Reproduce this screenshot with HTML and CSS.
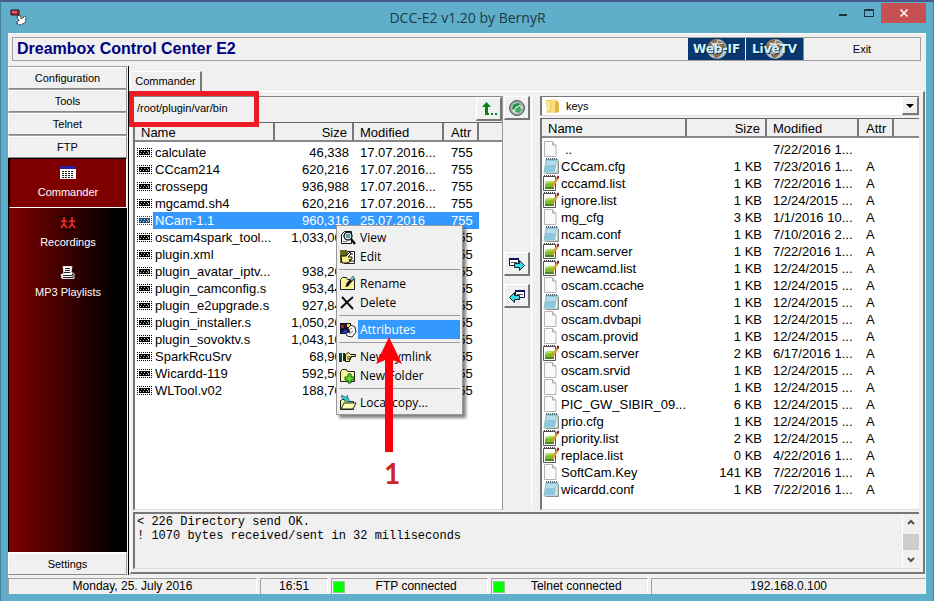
FILE: index.html
```html
<!DOCTYPE html>
<html lang="en">
<head>
<meta charset="utf-8">
<title>DCC-E2 v1.20 by BernyR</title>
<link rel="stylesheet" href="styles.css">
</head>
<body>
<svg class="sprite" aria-hidden="true">
  <symbol id="bin" viewBox="0 0 15 9"><path d="M0 .5h15M0 8.500h15M.5 0v9M14.500 0v9" fill="none" stroke="currentColor" stroke-dasharray="1 1"/><rect x="2" y="2" width="11" height="5" fill="currentColor"/><path d="M3 5h1v1H3zM4 3h1v1H4zM6 5h1v1H6zM7 3h1v1H7zM9 5h1v1H9zM10 3h1v1h-1zM11 4h1v2h-1z" fill="#bbb"/></symbol>
  <symbol id="page" viewBox="0 0 16 16"><path d="M1.500.5h8l3.500 3.500v11.500h-11.500z" fill="#fafafa" stroke="#b4b4b4"/><path d="M9.500.5v3.500h3.500" fill="#ddd" stroke="#aaa"/></symbol>
  <symbol id="note" viewBox="0 0 16 16"><path d="M3 1.500h12V13l-1 2H1z" fill="#dff1f7" stroke="#8ba7b0" stroke-width=".8"/><path d="M3.500 2h10.500l-2 12H1z" fill="#8cc8da"/><path d="M4 3h9l-1 4H3z" fill="#b5deeb"/><path d="M3 1h12" stroke="#51666e" stroke-width="2" stroke-dasharray="1 1"/><path d="M15.500 3v12.500H3" fill="none" stroke="#8e8e80"/></symbol>
  <symbol id="npp" viewBox="0 0 16 16"><path d="M.5 1.500h12v14H.5z" fill="#fff" stroke="#555"/><path d="M2 7q4-2 9-1v8H2z" fill="#b2dc5a"/><path d="M2 9q4-1 9-1v6H2z" fill="#7cbd2c"/><path d="M2 12h9v2H2z" fill="#3f8b1b"/><path d="M1 1h12" stroke="#444" stroke-width="2" stroke-dasharray="1 1"/><path d="M9 13l.5-3.500L13.500 3l1.500 1-4 7z" fill="#e9ad32" stroke="#a87416" stroke-width=".5"/><path d="M13.500 3l1-2.500 1.500.5v2l-1 1z" fill="#75202c"/></symbol>
  <symbol id="globe" viewBox="0 0 24 22"><circle cx="12" cy="11" r="10" fill="#b7c5cc"/><path d="M3 7q4-7 10-6l-2 4-4 1-1 4-4 1zM13 3l5 1 3 5-4 3-3-4zM8 13l6 1 2 3-5 4-3-4z" fill="#8b6c4b"/><path d="M5 14q7 3 14 0M6 5q6 3 12 0" fill="none" stroke="#f2f2e8"/></symbol>
</svg>
<div class="window">
  <header class="titlebar">
    <svg class="app-icon" viewBox="0 0 17 17"><path d="M1 1h8v5H1z" fill="#c52331" stroke="#301018"/><path d="M2 3h5" stroke="#efb2b2"/><path d="M7 7l3-1 1 4 4-3 1 2-1 5-5 2-4-2 3-2z" fill="#fff" stroke="#222" stroke-dasharray="2 1"/></svg>
    <h1>DCC-E2 v1.20 by BernyR</h1>
    <div class="window-buttons">
      <button aria-label="Minimize"><svg viewBox="0 0 26 20" width="26" height="20"><path d="M10 12h8" stroke="#1d3540" stroke-width="2"/></svg></button>
      <button aria-label="Maximize"><svg viewBox="0 0 26 20" width="26" height="20"><path d="M9.500 6.500h9v7h-9zM9 7.500h10" fill="none" stroke="#1d3540"/></svg></button>
      <button class="close" aria-label="Close"><svg viewBox="0 0 10 10" width="10" height="10"><path d="M1.500 1.500l7 7M8.500 1.500l-7 7" stroke="#fff" stroke-width="1.600"/></svg></button>
    </div>
  </header>
  <div class="client">
    <div class="banner">
      <h2>Dreambox Control Center E2</h2>
      <div class="links">
        <button class="web"><svg class="globe"><use href="#globe"/></svg><span>Web-IF</span></button>
        <button class="web"><svg class="globe"><use href="#globe"/></svg><span>LiveTV</span></button>
      </div>
      <button class="exit">Exit</button>
    </div>
    <div class="workspace">
      <nav class="sidebar">
        <button class="side">Configuration</button>
        <button class="side">Tools</button>
        <button class="side">Telnet</button>
        <button class="side">FTP</button>
        <div class="tools">
          <button class="tool active"><svg viewBox="0 0 16 14" width="16" height="14"><path d="M0 0h16v13H0z" fill="#fff"/><path d="M0 0h16v3H0z" fill="#2222a0"/><path d="M2 5.500h12M2 7.500h12M2 9.500h12M2 11.500h12" stroke="#222" stroke-dasharray="2 1"/></svg>Commander</button>
          <button class="tool"><svg viewBox="0 0 16 14" width="16" height="14"><path d="M0 .5h16M0 13.500h16" stroke="#000" stroke-dasharray="2 1"/><path d="M4 1v2M1 6l3-2 3 2M4 4v4l-3 4M4 8l3 4M12 1v2M9 6l3-2 3 2M12 4v4l-3 4M12 8l3 4" stroke="#f33025" stroke-width="1.500" fill="none"/></svg>Recordings</button>
          <button class="tool"><svg viewBox="0 0 16 14" width="16" height="14"><path d="M3 .5h9l-1 6 3 1v5H2l-1-4 3-1z" fill="#fff" stroke="#ddd"/><path d="M5 2.500h5M5 4.500h5M4 6.500h6M3 9.500h9l1-2M3 11.500h10v-4" stroke="#222" fill="none"/></svg>MP3 Playlists</button>
        </div>
        <button class="side settings">Settings</button>
      </nav>
      <main class="page">
        <div class="tabs"><button class="tab">Commander</button></div>
        <div class="sheet">
          <div class="panes">
            <section class="left">
              <div class="pathbar">
                <input class="path" type="text" aria-label="Remote path" value="/root/plugin/var/bin">
                <button class="raised" aria-label="Parent folder"><svg viewBox="0 0 18 16" width="18" height="16"><path d="M5 14h4v-2H8V6h3L6.500 1 2 6h3zM11 12h2v2h-2zM15 12h2v2h-2z" fill="#08820e"/></svg></button>
              </div>
              <div class="list">
                <table class="files remote">
                  <colgroup><col class="c-name"><col class="c-size"><col class="c-date"><col class="c-attr"><col></colgroup>
                  <thead><tr><th>Name</th><th>Size</th><th>Modified</th><th>Attr</th><th></th></tr></thead>
                  <tbody>
                    <tr><td><svg><use href="#bin"/></svg>calculate</td><td>46,338</td><td>17.07.2016...</td><td>755</td><td></td></tr>
                    <tr><td><svg><use href="#bin"/></svg>CCcam214</td><td>620,216</td><td>17.07.2016...</td><td>755</td><td></td></tr>
                    <tr><td><svg><use href="#bin"/></svg>crossepg</td><td>936,988</td><td>17.07.2016...</td><td>755</td><td></td></tr>
                    <tr><td><svg><use href="#bin"/></svg>mgcamd.sh4</td><td>620,216</td><td>17.07.2016...</td><td>755</td><td></td></tr>
                    <tr class="selected"><td><svg><use href="#bin"/></svg><span>NCam-1.1</span></td><td>960,316</td><td>25.07.2016</td><td>755</td><td></td></tr>
                    <tr><td><svg><use href="#bin"/></svg>oscam4spark_tool...</td><td>1,033,000</td><td></td><td>755</td><td></td></tr>
                    <tr><td><svg><use href="#bin"/></svg>plugin.xml</td><td>0</td><td></td><td>755</td><td></td></tr>
                    <tr><td><svg><use href="#bin"/></svg>plugin_avatar_iptv...</td><td>938,200</td><td></td><td>755</td><td></td></tr>
                    <tr><td><svg><use href="#bin"/></svg>plugin_camconfig.s</td><td>953,440</td><td></td><td>755</td><td></td></tr>
                    <tr><td><svg><use href="#bin"/></svg>plugin_e2upgrade.s</td><td>927,840</td><td></td><td>755</td><td></td></tr>
                    <tr><td><svg><use href="#bin"/></svg>plugin_installer.s</td><td>1,050,200</td><td></td><td>755</td><td></td></tr>
                    <tr><td><svg><use href="#bin"/></svg>plugin_sovoktv.s</td><td>1,043,100</td><td></td><td>755</td><td></td></tr>
                    <tr><td><svg><use href="#bin"/></svg>SparkRcuSrv</td><td>68,900</td><td></td><td>755</td><td></td></tr>
                    <tr><td><svg><use href="#bin"/></svg>Wicardd-119</td><td>592,500</td><td></td><td>755</td><td></td></tr>
                    <tr><td><svg><use href="#bin"/></svg>WLTool.v02</td><td>188,700</td><td></td><td>755</td><td></td></tr>
                  </tbody>
                </table>
              </div>
            </section>
            <section class="middle">
              <button class="raised" aria-label="Refresh"><svg viewBox="0 0 18 18" width="18" height="18"><circle cx="9" cy="9" r="7.500" fill="#96a3a2" stroke="#555e5e"/><circle cx="9" cy="9" r="5.500" fill="#d9e8df"/><path d="M4 10q0-6 6-6l3 1-2 2q-4 0-5 4z" fill="#299045"/><path d="M7 13l1-5 6-2-2 2 2 3-3 3z" fill="#4ba765"/><path d="M8 9l4-3" stroke="#fff"/></svg></button>
              <div class="transfer">
                <button class="raised" aria-label="Copy to local"><svg viewBox="0 0 18 14" width="18" height="14"><path d="M1.500 1.500h9v7h-9z" fill="#fff" stroke="#11115c"/><path d="M1 2h10" stroke="#11115c" stroke-width="2"/><path d="M3 5.500h6" stroke="#555"/><path d="M6.500 6.500h5v-3l5 5-5 5v-3h-5z" fill="#37dce2" stroke="#123"/></svg></button>
                <button class="raised" aria-label="Copy to box"><svg viewBox="0 0 18 14" width="18" height="14"><path d="M7.500 1.500h9v7h-9z" fill="#fff" stroke="#11115c"/><path d="M7 2h10" stroke="#11115c" stroke-width="2"/><path d="M9 5.500h6" stroke="#555"/><path d="M11.500 6.500h-5v-3l-5 5 5 5v-3h5z" fill="#37dce2" stroke="#123"/></svg></button>
              </div>
            </section>
            <section class="right">
              <div class="combo">
                <svg viewBox="0 0 14 16" width="14" height="16"><path d="M0 2h7l1 12-7 1z" fill="#edc95a"/><path d="M5 1l7 1v12l-7 1z" fill="#f8df86"/><path d="M9 3l4 1v10l-4 1z" fill="#e1b945"/><path d="M1 3h3v10H1z" fill="#f9e7a2"/></svg>
                <select aria-label="Local folder"><option>keys</option></select>
                <span class="drop"><svg viewBox="0 0 8 4" width="8" height="4"><path d="M0 0h8L4 4z"/></svg></span>
              </div>
              <div class="list">
                <table class="files local">
                  <colgroup><col class="c-name"><col class="c-size"><col class="c-date"><col class="c-attr"><col></colgroup>
                  <thead><tr><th>Name</th><th>Size</th><th>Modified</th><th>Attr</th><th></th></tr></thead>
                  <tbody>
                    <tr class="up"><td><svg><use href="#page"/></svg>..</td><td></td><td>7/22/2016 1...</td><td></td><td></td></tr>
                    <tr><td><svg><use href="#note"/></svg>CCcam.cfg</td><td>1 KB</td><td>7/23/2016 1...</td><td>A</td><td></td></tr>
                    <tr><td><svg><use href="#npp"/></svg>cccamd.list</td><td>1 KB</td><td>7/22/2016 1...</td><td>A</td><td></td></tr>
                    <tr><td><svg><use href="#npp"/></svg>ignore.list</td><td>1 KB</td><td>12/24/2015 ...</td><td>A</td><td></td></tr>
                    <tr><td><svg><use href="#page"/></svg>mg_cfg</td><td>3 KB</td><td>1/1/2016 10...</td><td>A</td><td></td></tr>
                    <tr><td><svg><use href="#note"/></svg>ncam.conf</td><td>1 KB</td><td>7/10/2016 2...</td><td>A</td><td></td></tr>
                    <tr><td><svg><use href="#npp"/></svg>ncam.server</td><td>1 KB</td><td>7/22/2016 1...</td><td>A</td><td></td></tr>
                    <tr><td><svg><use href="#npp"/></svg>newcamd.list</td><td>1 KB</td><td>12/24/2015 ...</td><td>A</td><td></td></tr>
                    <tr><td><svg><use href="#page"/></svg>oscam.ccache</td><td>1 KB</td><td>12/24/2015 ...</td><td>A</td><td></td></tr>
                    <tr><td><svg><use href="#note"/></svg>oscam.conf</td><td>1 KB</td><td>12/24/2015 ...</td><td>A</td><td></td></tr>
                    <tr><td><svg><use href="#page"/></svg>oscam.dvbapi</td><td>1 KB</td><td>12/24/2015 ...</td><td>A</td><td></td></tr>
                    <tr><td><svg><use href="#page"/></svg>oscam.provid</td><td>1 KB</td><td>12/24/2015 ...</td><td>A</td><td></td></tr>
                    <tr><td><svg><use href="#npp"/></svg>oscam.server</td><td>2 KB</td><td>6/17/2016 1...</td><td>A</td><td></td></tr>
                    <tr><td><svg><use href="#page"/></svg>oscam.srvid</td><td>1 KB</td><td>12/24/2015 ...</td><td>A</td><td></td></tr>
                    <tr><td><svg><use href="#page"/></svg>oscam.user</td><td>1 KB</td><td>12/24/2015 ...</td><td>A</td><td></td></tr>
                    <tr><td><svg><use href="#page"/></svg>PIC_GW_SIBIR_09...</td><td>6 KB</td><td>12/24/2015 ...</td><td>A</td><td></td></tr>
                    <tr><td><svg><use href="#note"/></svg>prio.cfg</td><td>1 KB</td><td>12/24/2015 ...</td><td>A</td><td></td></tr>
                    <tr><td><svg><use href="#npp"/></svg>priority.list</td><td>2 KB</td><td>12/24/2015 ...</td><td>A</td><td></td></tr>
                    <tr><td><svg><use href="#npp"/></svg>replace.list</td><td>0 KB</td><td>4/22/2016 1...</td><td>A</td><td></td></tr>
                    <tr><td><svg><use href="#page"/></svg>SoftCam.Key</td><td>141 KB</td><td>7/22/2016 1...</td><td>A</td><td></td></tr>
                    <tr><td><svg><use href="#note"/></svg>wicardd.conf</td><td>1 KB</td><td>7/22/2016 1...</td><td>A</td><td></td></tr>
                  </tbody>
                </table>
              </div>
            </section>
          </div>
          <div class="log">
            <pre>&lt; 226 Directory send OK.
! 1070 bytes received/sent in 32 milliseconds</pre>
            <div class="scroll">
              <button aria-label="Scroll up"><svg viewBox="0 0 8 6" width="8" height="6"><path d="M1 5l3-3 3 3" fill="none" stroke="#505050" stroke-width="2"/></svg></button>
              <span class="thumb"></span>
              <button aria-label="Scroll down"><svg viewBox="0 0 8 6" width="8" height="6"><path d="M1 1l3 3 3-3" fill="none" stroke="#505050" stroke-width="2"/></svg></button>
            </div>
          </div>
        </div>
        <div class="menu" role="menu">
          <button role="menuitem"><svg viewBox="0 0 18 16"><path d="M2.500 4.500l3-3h7v12h-10z" fill="#f4fcff" stroke="#111"/><path d="M4 11.500h4" stroke="#777"/><circle cx="9" cy="6" r="4" fill="#b9e7e9" stroke="#111" stroke-width="1.300"/><path d="M7 5h4M7 7h4" stroke="#345"/><path d="M12 9l4 5" stroke="#111" stroke-width="2.500"/></svg>View</button>
          <button role="menuitem"><svg viewBox="0 0 18 16"><path d="M1 1h7v13H1z" fill="#696920"/><path d="M8.500 2.500h7v12h-10z" fill="#fff" stroke="#222"/><path d="M2 7h5l4-4 1 2-3 3h4v2l-3 1 2 1-4 2H3z" fill="#f4f18c" stroke="#111"/><path d="M11 5h3M12 12h3" stroke="#222"/></svg>Edit</button>
          <hr>
          <button role="menuitem"><svg viewBox="0 0 18 16"><path d="M1.500 3.500l2-2h4l1 2h7v10h-14z" fill="#f9f795" stroke="#222"/><path d="M8 9l7-8" stroke="#111" stroke-width="3"/><path d="M12 4l3-3" stroke="#69d4dd" stroke-width="2"/><path d="M6 11l2-3 2 2z"/></svg>Rename</button>
          <button role="menuitem"><svg viewBox="0 0 18 16"><path d="M3 2l11 12M14 2q-6 5-12 11" stroke="#111" stroke-width="2" fill="none"/></svg>Delete</button>
          <hr>
          <button role="menuitem" class="hot"><svg viewBox="0 0 18 16"><path d="M1 1h11v11H1z" fill="#141425"/><path d="M2 3h3v3H2z" fill="#c11"/><path d="M8 2h3v3H8z" fill="#ffda21"/><path d="M3 11l3-4 3 4z" fill="#2235de"/><path d="M9 6l3-3 4 2 1 5-4 5-5-1-1-3 4-1z" fill="#fff" stroke="#222"/><path d="M10 8l3-2M10 12l4-3" stroke="#777"/></svg><span>Attributes</span></button>
          <hr>
          <button role="menuitem"><svg viewBox="0 0 18 16"><path d="M0 4h3v9H0z" fill="#064c38"/><path d="M4 4h2v8H4z" fill="#222"/><path d="M6.500 5.500l3-2 2 2h5v2h-4v1h-1v2h-1v2h-4z" fill="#f5f08b" stroke="#111"/><path d="M8 8h4M8 10h3" stroke="#333"/></svg>New Symlink</button>
          <button role="menuitem"><svg viewBox="0 0 18 16"><path d="M1.500 3.500l2-2h4l1 2h7v10h-14z" fill="#f9f795" stroke="#222"/><path d="M9 6h3v3h3v3h-3v3H9v-3H6V9h3z" fill="#5fe12f" stroke="#165b12"/></svg>New Folder</button>
          <hr>
          <button role="menuitem"><svg viewBox="0 0 18 16"><path d="M1.500 14.500v-9l2-1h4l1 2h6v8z" fill="#f9f795" stroke="#222"/><path d="M2 14l3-6h12l-3 6z" fill="#fffdb0" stroke="#222"/><path d="M3 0l5 3V0l3 7-6-1 1-1-4-3z" fill="#35cbd4" stroke="#125560" stroke-width=".6"/></svg>Local copy...</button>
        </div>
        <div class="highlight"></div>
        <div class="pointer">
          <svg viewBox="0 0 28 116" width="28" height="116"><path d="M14 0L27 27 18 23v92h-8V23L1 27z" fill="#fb0007"/></svg>
          <strong>1</strong>
        </div>
      </main>
    </div>
    <footer class="status">
      <span class="date">Monday, 25. July 2016</span>
      <span class="time">16:51</span>
      <span class="conn"><i></i><b>FTP connected</b></span>
      <span class="conn"><i></i><b>Telnet connected</b></span>
      <span class="ip">192.168.0.100</span>
    </footer>
  </div>
</div>
</body>
</html>
```
FILE: styles.css
```css
* { box-sizing: border-box; }
body { margin: 0; font: 11px/13px "Liberation Sans", Arial, sans-serif; color: #000; }
button { font: inherit; color: inherit; margin: 0; padding: 0; border: 0; border-radius: 0; background: none; }
h1, h2, pre { margin: 0; }
svg { display: block; flex: none; }
.sprite { position: absolute; width: 0; height: 0; }

.window { height: 100vh; display: flex; flex-direction: column; padding: 0 7px 7px; background: #5faeca; border-top: 2px solid #4a5791; border-left: 1px solid #467f98; border-right: 1px solid #467f98; }

.titlebar { height: 31px; flex: none; display: flex; align-items: flex-start; position: relative; padding-top: 1px; }
.titlebar h1 { flex: 1; padding-top: 5px; margin-left: 98px; text-align: center; font: 14px/20px "Open Sans", sans-serif; color: #1d3946; }
.app-icon { position: absolute; left: 2px; top: 7px; width: 17px; height: 17px; }
.window-buttons { display: flex; }
.window-buttons .close { width: 45px; height: 20px; background: #c75050; display: grid; place-items: center; }

.client { flex: 1; min-height: 0; display: flex; flex-direction: column; background: #f0f0f0; border-top: 1px solid #fff; }
.banner { flex: none; display: flex; align-items: stretch; height: 24px; margin: 3px 5px 5px 4px; border: 1px solid #a0a0a0; }
.banner h2 { flex: 1; padding-left: 4px; font: bold 16px/22px "Liberation Sans", Arial, sans-serif; color: #000080; }
.links { display: flex; gap: 1px; }
.web { width: 57px; background: #08386e; display: grid; place-items: center; font: bold 12px/22px "DejaVu Sans", sans-serif; color: #d2f3ff; text-shadow: 1px 1px 1px #001c38; }
.web span, .web svg { grid-area: 1 / 1; }
.web span { z-index: 1; }
.globe { width: 24px; height: 22px; }
.exit { width: 117px; border-left: 1px solid #888; }

.workspace { flex: 1; min-height: 0; display: flex; }
.sidebar { width: 121px; flex: none; display: flex; flex-direction: column; border-right: 1px solid #000; padding-right: 1px; }
.side { height: 23px; flex: none; padding-top: 2px; border: 1px solid #a0a0a0; border-bottom-color: #888; border-left-color: #fff; box-shadow: inset 0 1px #fff; }
.settings { border-top-color: #fff; }
.tools { flex: 1; min-height: 0; display: flex; flex-direction: column; background: linear-gradient(90deg, #800000, #000 90%); border-left: 1px solid #000; }
.tool { height: 50px; flex: none; display: flex; flex-direction: column; align-items: center; gap: 6px; padding-top: 8px; color: #fff; }
.tool.active { padding-top: 7px; background: #800000; border: 1px solid #000; border-bottom-color: #fff; border-right-color: #fff; }

.page { flex: 1; min-width: 0; position: relative; display: flex; flex-direction: column; padding: 5px 1px 1px; }
.tabs { height: 20px; flex: none; display: flex; }
.tab { width: 72px; border-top: 1px solid #fff; border-left: 1px solid #fff; border-right: 2px solid #777; }
.sheet { flex: 1; min-height: 0; display: flex; flex-direction: column; gap: 2px; padding: 4px 4px 3px 2px; border-top: 1px solid #fff; border-left: 1px solid #fff; border-right: 2px solid #777; border-bottom: 2px solid #777; }
.panes { flex: 1; min-height: 0; display: flex; }
.left { flex: 369 1 0; min-width: 0; display: flex; flex-direction: column; border-right: 1px solid #999; }
.middle { width: 29px; flex: none; padding: 0 1px; display: flex; flex-direction: column; gap: 132px; border-right: 1px solid #fff; }
.right { flex: 379 1 0; min-width: 0; margin-left: 8px; display: flex; flex-direction: column; gap: 2px; }
.pathbar { height: 26px; flex: none; display: flex; align-items: flex-start; border-top: 1px solid #888; }
.path { flex: 1; min-width: 0; height: 21px; border: 0; padding: 0 4px; background: transparent; font: inherit; color: inherit; }
.raised { width: 26px; height: 24px; flex: none; display: grid; place-items: center; border: 1px solid #fff; border-right: 2px solid #777; border-bottom: 2px solid #777; }
.transfer { display: flex; flex-direction: column; gap: 8px; }
.list { flex: 1; min-height: 0; overflow: hidden; background: #fff; border-top: 1px solid #666; border-left: 2px solid #777; border-bottom: 1px solid #ddd; }

.files { width: 100%; table-layout: fixed; border-collapse: separate; border-spacing: 0; font-size: 13px; line-height: 17px; }
.files th { height: 19px; padding: 2px 0 0; font-weight: normal; text-align: left; background: #f0f0f0; border-right: 2px solid #777; border-bottom: 2px solid #888; line-height: 15px; }
.files th:last-child { border-right: 0; }
.files td { height: 17px; padding: 0; white-space: nowrap; }
.files tbody::before { content: ""; display: block; height: 2px; }
.files.local tbody::before { height: 3px; }
.files th:first-child { padding-left: 6px; }
.files th:nth-child(2), .files td:nth-child(2) { text-align: right; padding-right: 5px; }
.files th:nth-child(3), .files td:nth-child(3) { padding-left: 6px; }
.files th:nth-child(4), .files td:nth-child(4) { padding-left: 7px; }
.files td:first-child svg { float: left; }
.files .c-size { width: 79px; }
.files .c-date { width: 90px; }
.files .c-attr { width: 35px; }
.remote .c-name { width: 140px; }
.remote td:first-child svg { width: 15px; height: 9px; margin: 4px 3px 0 2px; }
.local .c-name { width: 145px; }
.local .c-size { width: 80px; }
.local .c-date { width: 92px; }
.local td:first-child svg { width: 16px; height: 16px; margin: 0 2px 0 1px; }
.local .up td:first-child svg { margin-right: 6px; }
.selected td { background: #3399ff; color: #fff; }
.selected td:first-child { background: linear-gradient(90deg, #fff 18px, #3399ff 18px); }
.selected td:last-child { background: none; }
.selected svg { color: #17548c; }

.combo { height: 20px; flex: none; display: flex; align-items: center; gap: 2px; padding-left: 4px; background: #fff; border-top: 1px solid #777; border-left: 2px solid #777; border-bottom: 1px solid #ddd; }
.combo select { flex: 1; min-width: 0; height: 17px; appearance: none; border: 0; background: transparent; padding: 0 4px; font: inherit; color: inherit; }
.drop { width: 17px; height: 18px; display: grid; place-items: center; background: #f0f0f0; border: 1px solid #fff; border-right: 2px solid #777; border-bottom: 2px solid #777; }

.log { height: 57px; flex: none; display: flex; border-top: 2px solid #777; border-left: 2px solid #777; border-bottom: 1px solid #ddd; }
.log pre { flex: 1; min-width: 0; padding: 1px 2px; font: 12px/14px "Liberation Mono", "Courier New", monospace; }
.scroll { width: 17px; display: flex; flex-direction: column; border-left: 1px solid #fff; }
.scroll button { height: 17px; display: grid; place-items: center; }
.thumb { height: 17px; margin: 3px 0 1px; background: #cdcdcd; }

.menu { position: absolute; left: 207px; top: 159px; width: 127px; padding: 2px; background: #f0f0f0; border: 1px solid #979797; box-shadow: 3px 3px 3px rgba(0, 0, 0, .5); }
.menu button { display: flex; align-items: center; gap: 3px; width: 100%; height: 19px; text-align: left; font: 12px/19px "Open Sans", sans-serif; }
.menu svg { width: 18px; height: 16px; }
.menu hr { height: 1px; margin: 3px 0 4px; border: 0; background: #999; }
.menu .hot { gap: 1px; }
.menu .hot span { flex: 1; padding-left: 2px; background: #3399ff; color: #fff; }
.highlight { position: absolute; left: 0; top: 25px; width: 130px; height: 36px; border: 5px solid #ec1c24; }
.pointer { position: absolute; left: 246px; top: 271px; width: 28px; display: flex; flex-direction: column; align-items: center; }
.pointer strong { margin-left: 6px; font: bold 28px/40px Lato, sans-serif; color: #cf2229; }

.status { height: 19px; flex: none; display: flex; gap: 3px; padding-top: 3px; font-size: 12px; line-height: 15px; text-align: center; }
.status > span { border-top: 1px solid #a0a0a0; border-left: 1px solid #a0a0a0; border-right: 1px solid #fff; flex: 157 1 0; }
.status .date { flex-grow: 250; }
.status .time { flex-grow: 67; }
.status .ip { flex-grow: 276; }
.status .conn { display: flex; align-items: center; }
.conn i { width: 12px; height: 12px; margin-left: 1px; background: #0f0; border: 1px solid #8c8; }
.conn b { flex: 1; font-weight: normal; }
```
